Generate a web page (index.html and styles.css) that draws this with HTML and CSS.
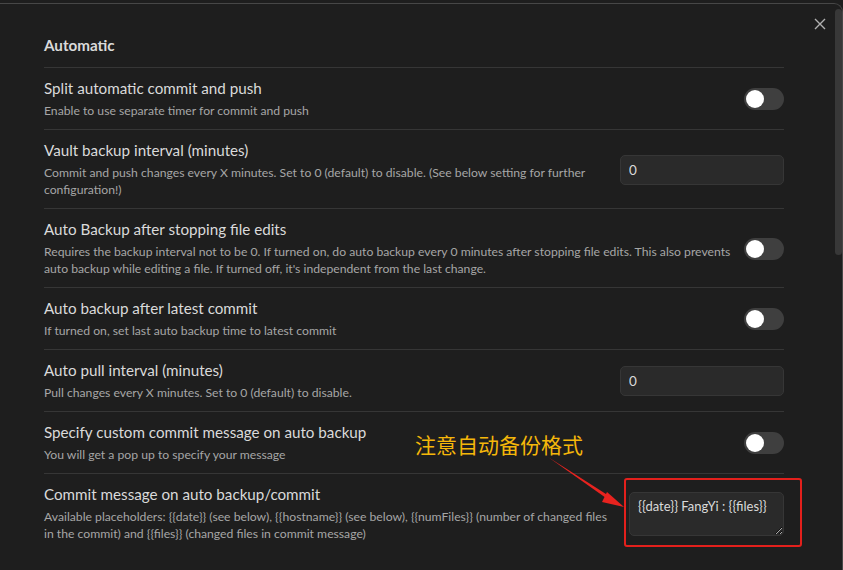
FILE: index.html
```html
<!DOCTYPE html>
<html lang="en">
<head>
<meta charset="utf-8">
<title>Settings - Automatic</title>
<link rel="stylesheet" href="styles.css">
</head>
<body>
<div class="modal">
  <div class="modal-content">
    <div class="setting-heading">Automatic</div>

    <div class="setting-item">
      <div class="setting-info">
        <div class="setting-name">Split automatic commit and push</div>
        <div class="setting-desc">Enable to use separate timer for commit and push</div>
      </div>
      <div class="setting-control"><div class="toggle"><div class="knob"></div></div></div>
    </div>

    <div class="setting-item">
      <div class="setting-info">
        <div class="setting-name">Vault backup interval (minutes)</div>
        <div class="setting-desc">Commit and push changes every X minutes. Set to 0 (default) to disable. (See below setting for further configuration!)</div>
      </div>
      <div class="setting-control"><input class="text-input" type="text" value="0"></div>
    </div>

    <div class="setting-item">
      <div class="setting-info">
        <div class="setting-name">Auto Backup after stopping file edits</div>
        <div class="setting-desc">Requires the backup interval not to be 0. If turned on, do auto backup every 0 minutes after stopping file edits. This also prevents auto backup while editing a file. If turned off, it's independent from the last change.</div>
      </div>
      <div class="setting-control"><div class="toggle"><div class="knob"></div></div></div>
    </div>

    <div class="setting-item">
      <div class="setting-info">
        <div class="setting-name">Auto backup after latest commit</div>
        <div class="setting-desc">If turned on, set last auto backup time to latest commit</div>
      </div>
      <div class="setting-control"><div class="toggle"><div class="knob"></div></div></div>
    </div>

    <div class="setting-item">
      <div class="setting-info">
        <div class="setting-name">Auto pull interval (minutes)</div>
        <div class="setting-desc">Pull changes every X minutes. Set to 0 (default) to disable.</div>
      </div>
      <div class="setting-control"><input class="text-input" type="text" value="0"></div>
    </div>

    <div class="setting-item">
      <div class="setting-info">
        <div class="setting-name">Specify custom commit message on auto backup</div>
        <div class="setting-desc">You will get a pop up to specify your message</div>
      </div>
      <div class="setting-control"><div class="toggle"><div class="knob"></div></div></div>
    </div>

    <div class="setting-item last">
      <div class="setting-info">
        <div class="setting-name">Commit message on auto backup/commit</div>
        <div class="setting-desc">Available placeholders: {{date}} (see below), {{hostname}} (see below), {{numFiles}} (number of changed files in the commit) and {{files}} (changed files in commit message)</div>
      </div>
      <div class="setting-control"><textarea class="text-area">{{date}} FangYi : {{files}}</textarea></div>
    </div>
  </div>
  <div class="scroll-track"><div class="scroll-thumb"></div></div>

  <div class="close-btn">
    <svg width="12" height="12" viewBox="0 0 12 12"><path d="M1 1 L11 11 M11 1 L1 11" stroke="#b0b0b0" stroke-width="1.4" fill="none"/></svg>
  </div>

  <div class="note-text">注意自动备份格式</div>
  <svg class="note-arrow" width="90" height="60" viewBox="0 0 90 60">
    <path d="M2 1 L67 42.5 L65 45.5 Z" fill="#e8231f"/>
    <path d="M61 36 L78 51 L56 46 Z" fill="#e8231f"/>
  </svg>
  <div class="note-box"></div>
</div>
</body>
</html>
```

FILE: styles.css
```css
html, body {
  margin: 0;
  padding: 0;
  background: #1e1e1e;
}
body {
  width: 843px;
  height: 570px;
  overflow: hidden;
  font-family: "Lato", "Open Sans", sans-serif;
  color: #dadada;
}
.modal {
  position: relative;
  margin-top: 3px;
  height: 566px;
  border-top: 1px solid #474747;
  border-right: 1px solid #474747;
  border-top-right-radius: 9px;
  display: flex;
  background: #1e1e1e;
}
.modal-content {
  flex: 1;
  padding-left: 44px;
  padding-right: 51px;
}
.scroll-track {
  width: 7px;
  padding-top: 5px;
}
.scroll-thumb {
  width: 7px;
  height: 246px;
  border-radius: 4px;
  background: #383838;
}
.setting-heading {
  font-size: 15.2px;
  font-weight: 700;
  line-height: 18px;
  padding: 32px 0 13px;
  color: #dadada;
}
.setting-item {
  display: flex;
  align-items: center;
  gap: 12px;
  border-top: 1px solid #363636;
  padding: 11px 0 10px;
}
.setting-info {
  flex: 1 1 auto;
  min-width: 0;
}
.setting-name {
  font-size: 15.2px;
  line-height: 18px;
  color: #dadada;
}
.setting-desc {
  font-size: 12.2px;
  line-height: 17px;
  padding-top: 5px;
  color: #a6a6a6;
}
.setting-control {
  flex: none;
  display: flex;
  justify-content: flex-end;
}
.toggle {
  width: 40px;
  height: 22px;
  border-radius: 11px;
  background: #3f3f3f;
  position: relative;
}
.knob {
  position: absolute;
  left: 2px;
  top: 2px;
  width: 18px;
  height: 18px;
  border-radius: 50%;
  background: #ffffff;
}
.text-input {
  box-sizing: border-box;
  width: 164px;
  height: 30px;
  background: #2a2a2a;
  border: 1px solid #363636;
  border-radius: 5px;
  color: #dadada;
  font-family: "Lato", "Open Sans", sans-serif;
  font-size: 13.5px;
  padding: 0 8px;
  outline: none;
}
.text-area {
  box-sizing: border-box;
  width: 155px;
  height: 44px;
  background: #2a2a2a;
  border: 1px solid #363636;
  border-radius: 5px;
  color: #dadada;
  font-family: "Lato", "Open Sans", sans-serif;
  font-size: 13px;
  line-height: 17px;
  padding: 5px 8px;
  outline: none;
  resize: vertical;
  display: block;
  white-space: nowrap;
  overflow: hidden;
}
.close-btn {
  position: absolute;
  left: 814px;
  top: 14px;
  width: 12px;
  height: 12px;
}
.close-btn svg { display: block; }
.note-text {
  position: absolute;
  left: 415px;
  top: 425px;
  font-family: "Noto Sans CJK SC", sans-serif;
  font-size: 21px;
  line-height: 30px;
  color: #f5b70a;
}
.note-arrow {
  position: absolute;
  left: 546px;
  top: 452px;
}
.note-box {
  position: absolute;
  left: 624px;
  top: 474px;
  width: 174px;
  height: 65px;
  border: 2px solid #e3201c;
  border-radius: 3px;
}
```
